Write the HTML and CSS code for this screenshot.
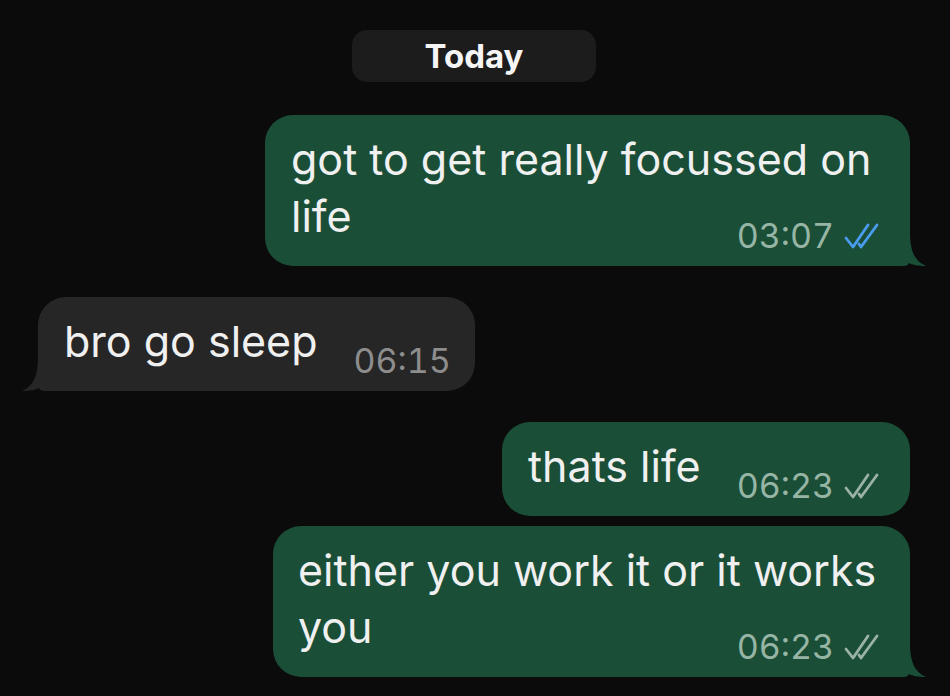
FILE: index.html
```html
<!DOCTYPE html>
<html lang="en">
<head>
    <meta charset="UTF-8">
    <meta name="viewport" content="width=device-width, initial-scale=1.0">
    <title>Chat</title>
    <link rel="stylesheet" href="styles.css">
</head>
<body>
  <div class="chat">
    <div class="day"><span>Today</span></div>

    <div class="row out">
      <div class="bubble out wide">
        got to get really focussed on life
        <span class="meta">03:07 <svg class="ticks read" viewBox="0 0 36 28"><path d="M2 16 L9 25 L24 3 M15 22 L17 25 L33 3"/></svg></span>
        <svg class="tail" viewBox="0 0 30 34"><path d="M0 0 H14 C14 18 18 29 30 34 C22 34 16 33 11 30 C7 33 3 34 0 34 Z"/></svg>
      </div>
    </div>

    <div class="row in">
      <div class="bubble in">
        bro go sleep
        <span class="meta">06:15</span>
        <svg class="tail" viewBox="0 0 30 34"><path d="M30 0 H16 C16 18 12 29 0 34 C8 34 14 33 19 30 C23 33 27 34 30 34 Z"/></svg>
      </div>
    </div>

    <div class="row out">
      <div class="bubble out">
        thats life
        <span class="meta">06:23 <svg class="ticks" viewBox="0 0 36 28"><path d="M2 16 L9 25 L24 3 M15 22 L17 25 L33 3"/></svg></span>
      </div>
    </div>

    <div class="row out next">
      <div class="bubble out wide narrow">
        either you work it or it works you
        <span class="meta">06:23 <svg class="ticks" viewBox="0 0 36 28"><path d="M2 16 L9 25 L24 3 M15 22 L17 25 L33 3"/></svg></span>
        <svg class="tail" viewBox="0 0 30 34"><path d="M0 0 H14 C14 18 18 29 30 34 C22 34 16 33 11 30 C7 33 3 34 0 34 Z"/></svg>
      </div>
    </div>
  </div>
</body>
</html>
```

FILE: styles.css
```css
*{
    margin: 0;
    padding: 0;
    box-sizing: border-box;
}
body{
    background-color: #0b0b0b;
    font-family: Inter, 'Liberation Sans', sans-serif;
    color: #f0f0f0;
    width: 950px;
    height: 696px;
    overflow: hidden;
}
.chat{
    padding: 30px 40px 0 38px;
    display: flex;
    flex-direction: column;
}
.day{
    display: flex;
    justify-content: center;
    margin-bottom: 33px;
}
.day span{
    width: 244px;
    height: 52px;
    background-color: #1c1c1c;
    border-radius: 15px;
    display: flex;
    align-items: center;
    justify-content: center;
    font-weight: 700;
    font-size: 33px;
    color: #f5f5f5;
}
.row{
    display: flex;
    margin-bottom: 31px;
}
.row.out{
    justify-content: flex-end;
}
.row.in{
    justify-content: flex-start;
}
.row.next{
    margin-top: -21px;
}
.bubble{
    position: relative;
    display: flow-root;
    font-size: 43px;
    line-height: 57px;
    padding: 16px 30px 10px 26px;
    border-radius: 28px;
    max-width: 645px;
}
.bubble.out{
    background-color: #1a4e37;
}
.bubble.in{
    background-color: #262626;
    padding-right: 24px;
}
.bubble.wide{
    width: 645px;
}
.bubble.narrow{
    width: 637px;
    padding-left: 25px;
}
.meta{
    float: right;
    margin-top: 28px;
    margin-left: 36px;
    font-size: 34px;
    line-height: 40px;
    font-variant-numeric: tabular-nums;
    display: flex;
    align-items: center;
    gap: 10px;
}
.bubble.out .meta{
    color: #97b5a5;
}
.bubble.in .meta{
    color: #8d8d8d;
}
.ticks{
    width: 36px;
    height: 28px;
    fill: none;
    stroke: #9ab3a6;
    stroke-width: 2.8;
    stroke-linecap: round;
    stroke-linejoin: round;
}
.ticks.read{
    stroke: #4a9cf0;
}
.tail{
    position: absolute;
    bottom: 0;
    width: 30px;
    height: 34px;
}
.bubble.out .tail{
    right: -16px;
    fill: #1a4e37;
}
.bubble.in .tail{
    left: -16px;
    fill: #262626;
}
.bubble.out:has(.tail){
    border-bottom-right-radius: 6px;
}
.bubble.in:has(.tail){
    border-bottom-left-radius: 6px;
}
```
